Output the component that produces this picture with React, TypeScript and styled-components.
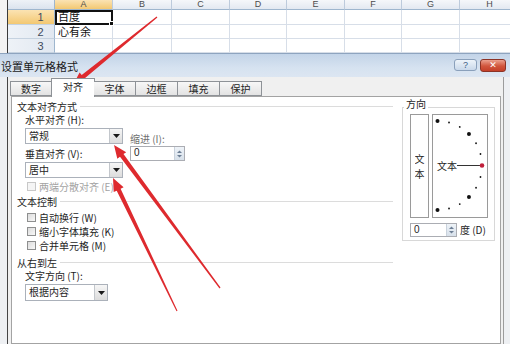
import styled, { createGlobalStyle } from "styled-components";

const GlobalStyle = createGlobalStyle`
  html, body { margin: 0; padding: 0; background: #fff; }
  body {
    font-family: "Noto Sans CJK SC", "Noto Sans", sans-serif;
    color: #1e1e1e;
  }
  * { box-sizing: border-box; }
`;

const COLUMNS = ["A", "B", "C", "D", "E", "F", "G", "H"];
const TABS = ["数字", "对齐", "字体", "边框", "填充", "保护"];

type Pt = [number, number];

function arrowPoints(tail: Pt, tip: Pt): string {
  const [x1, y1] = tail;
  const [x2, y2] = tip;
  const len = Math.hypot(x2 - x1, y2 - y1);
  const ux = (x2 - x1) / len;
  const uy = (y2 - y1) / len;
  const nx = -uy;
  const ny = ux;
  const head = 13;
  const bx = x2 - ux * head;
  const by = y2 - uy * head;
  const pts: Pt[] = [
    [x1 + nx * 0.6, y1 + ny * 0.6],
    [bx + nx * 2.2, by + ny * 2.2],
    [bx + nx * 5.5, by + ny * 5.5],
    [x2, y2],
    [bx - nx * 5.5, by - ny * 5.5],
    [bx - nx * 2.2, by - ny * 2.2],
    [x1 - nx * 0.6, y1 - ny * 0.6],
  ];
  return pts.map((p) => p.map((v) => v.toFixed(1)).join(",")).join(" ");
}

function DownArrow() {
  return (
    <svg width="7" height="4" viewBox="0 0 7 4">
      <path d="M0 0 L7 0 L3.5 4 Z" fill="#1a1a1a" />
    </svg>
  );
}

function Select({ text, width, height = 16 }: { text: string; width: number; height?: number }) {
  return (
    <SelectBox $width={width} $height={height}>
      <SelectText>{text}</SelectText>
      <DropButton>
        <DownArrow />
      </DropButton>
    </SelectBox>
  );
}

function SpinInput({ width, height = 14 }: { width: number; height?: number }) {
  return (
    <SpinBox $width={width} $height={height}>
      <SpinText>0</SpinText>
      <Spinner>
        <svg width="9" height="10" viewBox="0 0 9 10">
          <path d="M4.5 1.5 L7 4 L2 4 Z" fill="#6d7f95" />
          <path d="M2 6 L7 6 L4.5 8.5 Z" fill="#6d7f95" />
        </svg>
      </Spinner>
    </SpinBox>
  );
}

function Dial() {
  const cx = 4.5;
  const cy = 50.5;
  const r = 44.5;
  const dots = [];
  for (let a = -90; a <= 90; a += 15) {
    if (a === 0) continue;
    const t = (a * Math.PI) / 180;
    const big = a % 45 === 0;
    dots.push(
      <circle
        key={a}
        cx={cx + r * Math.cos(t)}
        cy={cy + r * Math.sin(t)}
        r={big ? 2 : 0.9}
        fill="#111"
      />
    );
  }
  return (
    <svg width="54" height="102" viewBox="0 0 54 102">
      {dots}
      <text x="4" y="54.5" fontSize="10" fill="#1e1e1e" fontFamily="Noto Sans CJK SC, sans-serif">
        文本
      </text>
      <line x1="24" y1="50.5" x2="47" y2="50.5" stroke="#333" strokeWidth="1" />
      <circle cx={cx + r} cy={cy} r="2.3" fill="#c0203a" />
    </svg>
  );
}

export default function App(): React.ReactElement {
  return (
    <Page>
      <GlobalStyle />
      <Sheet>
        <Corner />
        {COLUMNS.map((c, i) => (
          <ColHead key={c} $active={i === 0}>
            {c}
          </ColHead>
        ))}
        {[1, 2, 3].map((row) => (
          <SheetRow key={row}>
            <RowHead $active={row === 1}>{row}</RowHead>
            {COLUMNS.map((c, i) => (
              <Cell key={c} $selected={row === 1 && i === 0}>
                {i === 0 && row === 1 && "百度"}
                {i === 0 && row === 2 && "心有余"}
                {row === 1 && i === 0 && <FillHandle />}
              </Cell>
            ))}
          </SheetRow>
        ))}
      </Sheet>

      <Dialog>
        <TitleBar>
          <Title>设置单元格格式</Title>
          <WindowButtons>
            <HelpButton>?</HelpButton>
            <CloseButton>✕</CloseButton>
          </WindowButtons>
        </TitleBar>

        <DialogBody>
          <TabStrip>
            {TABS.map((t) => (
              <Tab key={t} $active={t === "对齐"}>
                {t}
              </Tab>
            ))}
          </TabStrip>

          <Panel>
            <LeftColumn>
              <GroupHeader>文本对齐方式</GroupHeader>
              <FieldLabel>水平对齐 (H):</FieldLabel>
              <AlignRow>
                <AlignMain>
                  <Select text="常规" width={98} />
                  <FieldLabel $tall>垂直对齐 (V):</FieldLabel>
                  <Select text="居中" width={98} />
                </AlignMain>
                <IndentColumn>
                  <IndentLabel>缩进 (I):</IndentLabel>
                  <SpinInput width={55} height={15} />
                </IndentColumn>
              </AlignRow>
              <CheckRow $disabled $height={16}>
                <CheckBox $disabled />
                两端分散对齐 (E)
              </CheckRow>

              <GroupHeader>文本控制</GroupHeader>
              <CheckList>
                <CheckRow>
                  <CheckBox />
                  自动换行 (W)
                </CheckRow>
                <CheckRow>
                  <CheckBox />
                  缩小字体填充 (K)
                </CheckRow>
                <CheckRow>
                  <CheckBox />
                  合并单元格 (M)
                </CheckRow>
              </CheckList>

              <GroupHeader $gapTop={3}>从右到左</GroupHeader>
              <FieldLabel>文字方向 (T):</FieldLabel>
              <DirectionSelect>
                <Select text="根据内容" width={83} height={17} />
              </DirectionSelect>
            </LeftColumn>

            <OrientationGroup>
              <GroupTitle>方向</GroupTitle>
              <Frame>
                <DialRow>
                  <VerticalText>
                    <VerticalChar>文</VerticalChar>
                    <VerticalChar>本</VerticalChar>
                  </VerticalText>
                  <DialBox>
                    <Dial />
                  </DialBox>
                </DialRow>
                <DegreeRow>
                  <SpinInput width={47} />
                  <DegreeLabel>度 (D)</DegreeLabel>
                </DegreeRow>
              </Frame>
            </OrientationGroup>
          </Panel>
        </DialogBody>
      </Dialog>

      <Arrows width="510" height="344" viewBox="0 0 510 344">
        <polygon points={arrowPoints([157, 17], [73, 85])} fill="#de2a2e" />
        <polygon points={arrowPoints([220, 288], [114, 145])} fill="#de2a2e" />
        <polygon points={arrowPoints([177, 311], [113, 178])} fill="#de2a2e" />
      </Arrows>
    </Page>
  );
}

const Page = styled.div`
  position: relative;
  width: 510px;
  height: 344px;
  overflow: hidden;
  background: #f3f3f3;
`;

const Sheet = styled.div`
  display: grid;
  grid-template-columns: 47px 58px 59px 58px 57px 58px 57px 58px 60px;
  grid-template-rows: 10px 15px 14px 14px;
  margin-left: 7px;
  border-left: 1px solid #3a3a3a;
  overflow: hidden;
  background: #fff;
  font-family: "Liberation Sans", "Noto Sans CJK SC", sans-serif;
`;

const Corner = styled.div`
  background: linear-gradient(#eef2f7, #dbe3ee);
  border-right: 1px solid #9eb6ce;
  border-bottom: 1px solid #9eb6ce;
`;

const ColHead = styled.div<{ $active?: boolean }>`
  display: flex;
  align-items: center;
  justify-content: center;
  font-size: 9px;
  line-height: 9px;
  color: #4c4c4c;
  background: ${(p) => (p.$active ? "linear-gradient(#fbe3b3, #f3c872)" : "linear-gradient(#f5f7fa, #e3e9f1)")};
  border-right: 1px solid #bdcbdc;
  border-bottom: 1px solid #9eb6ce;
`;

const SheetRow = styled.div`
  display: contents;
`;

const RowHead = styled.div<{ $active?: boolean }>`
  padding-left: 19px;
  text-align: center;
  font-size: 11px;
  line-height: 14px;
  color: #3e4a5c;
  background: ${(p) => (p.$active ? "linear-gradient(#fbe3b3, #f3c872)" : "linear-gradient(90deg, #eef2f7, #e1e8f1)")};
  border-right: 1px solid #9eb6ce;
  border-bottom: 1px solid #c5d2e0;
`;

const Cell = styled.div<{ $selected?: boolean }>`
  position: relative;
  padding-left: 3px;
  font-size: 11px;
  line-height: 13px;
  font-family: "Noto Sans CJK SC", sans-serif;
  color: #111;
  border-right: 1px solid #d7dee8;
  border-bottom: 1px solid #d7dee8;
  ${(p) => (p.$selected ? "outline: 2px solid #111; outline-offset: -2px; z-index: 1;" : "")}
`;

const FillHandle = styled.span`
  position: absolute;
  right: -2px;
  bottom: -2px;
  width: 5px;
  height: 5px;
  background: #111;
  border: 1px solid #fff;
`;

const Dialog = styled.section`
  height: 291px;
  background: #eef0f3;
  border-top: 1px solid #8ea4bf;
  display: flex;
  flex-direction: column;
`;

const TitleBar = styled.header`
  display: flex;
  align-items: center;
  height: 23px;
  padding: 0 4px 0 1px;
  background: linear-gradient(#c3d4e8, #d6e2f0 60%, #dce6f2);
`;

const Title = styled.h1`
  margin: 0;
  font-size: 11px;
  font-weight: normal;
  color: #1b1b1b;
`;

const WindowButtons = styled.div`
  display: flex;
  gap: 3px;
  margin-left: auto;
  align-self: flex-start;
  margin-top: 5px;
`;

const HelpButton = styled.div`
  width: 23px;
  height: 12px;
  border: 1px solid #8aa0bb;
  border-radius: 3px;
  background: linear-gradient(#eef4fa, #c9d8ea);
  color: #3d5f87;
  font-size: 9px;
  line-height: 10px;
  text-align: center;
  font-family: "Liberation Sans", sans-serif;
`;

const CloseButton = styled.div`
  width: 26px;
  height: 13px;
  border: 1px solid #8c3326;
  border-radius: 3px;
  background: linear-gradient(#eba18f, #d1553c 55%, #c4402a);
  color: #fff;
  font-size: 9px;
  line-height: 11px;
  font-weight: bold;
  text-align: center;
  font-family: "DejaVu Sans", sans-serif;
`;

const DialogBody = styled.div`
  flex: 1;
  display: flex;
  flex-direction: column;
  margin: 0 6px 0 7px;
  padding: 0 2px 0 3px;
  border-left: 1px solid #454545;
  border-right: 1px solid #9c9c9c;
  background: #f0f0f0;
`;

const TabStrip = styled.nav`
  display: flex;
  align-items: flex-end;
  height: 19px;
  margin-left: -1px;
  position: relative;
  z-index: 1;
`;

const Tab = styled.div<{ $active?: boolean }>`
  width: ${(p) => (p.$active ? "44px" : "42px")};
  height: ${(p) => (p.$active ? "19px" : "15px")};
  margin: ${(p) => (p.$active ? "0 -1px -1px" : "0")};
  border: 1px solid #8e9297;
  border-bottom: ${(p) => (p.$active ? "none" : "1px solid #8e9297")};
  border-left-width: ${(p) => (p.$active ? "1px" : "0")};
  background: ${(p) => (p.$active ? "#fff" : "linear-gradient(#f7f7f7, #e3e3e3)")};
  font-size: 10px;
  line-height: ${(p) => (p.$active ? "16px" : "13px")};
  text-align: center;
  &:first-child {
    border-left-width: 1px;
  }
`;

const Panel = styled.main`
  flex: 1;
  display: flex;
  padding: 2px 0 0 5px;
  border: 1px solid #a3a3a3;
  background: #fff;
  font-size: 10px;
`;

const LeftColumn = styled.div`
  width: 376px;
  display: flex;
  flex-direction: column;
`;

const GroupHeader = styled.div<{ $gapTop?: number }>`
  display: flex;
  align-items: center;
  gap: 3px;
  height: 14px;
  margin-top: ${(p) => p.$gapTop ?? 0}px;
  white-space: nowrap;
  &::after {
    content: "";
    flex: 1;
    border-top: 1px solid #dcdcdc;
  }
`;

const FieldLabel = styled.div<{ $tall?: boolean }>`
  height: ${(p) => (p.$tall ? "18px" : "14px")};
  line-height: ${(p) => (p.$tall ? "19px" : "14px")};
  padding-left: 8px;
  white-space: nowrap;
`;

const AlignRow = styled.div`
  display: flex;
  padding-left: 8px;
  margin-top: 1px;
`;

const AlignMain = styled.div`
  display: flex;
  flex-direction: column;
  & > ${FieldLabel} {
    padding-left: 0;
  }
`;

const IndentColumn = styled.div`
  display: flex;
  flex-direction: column;
  margin-left: 7px;
  padding-top: 4px;
`;

const IndentLabel = styled.div`
  height: 14px;
  line-height: 14px;
  color: #6f6f6f;
`;

const SelectBox = styled.div<{ $width: number; $height: number }>`
  display: flex;
  width: ${(p) => p.$width}px;
  height: ${(p) => p.$height}px;
  border: 1px solid #abb1ba;
  background: #fff;
`;

const SelectText = styled.span`
  flex: 1;
  padding-left: 3px;
  line-height: 14px;
`;

const DropButton = styled.span`
  display: flex;
  align-items: center;
  justify-content: center;
  width: 13px;
  border-left: 1px solid #c3c7cc;
  background: linear-gradient(#f6f6f6, #dcdcdc);
`;

const SpinBox = styled.div<{ $width: number; $height: number }>`
  display: flex;
  width: ${(p) => p.$width}px;
  height: ${(p) => p.$height}px;
  border: 1px solid #abadb3;
  background: #fff;
`;

const SpinText = styled.span`
  flex: 1;
  padding-left: 3px;
  line-height: 12px;
  font-family: "Liberation Sans", sans-serif;
`;

const Spinner = styled.span`
  display: flex;
  align-items: center;
  justify-content: center;
  width: 10px;
  background: linear-gradient(#eef3f8, #d7e0ea);
  border-left: 1px solid #c9d2dc;
`;

const CheckRow = styled.label<{ $disabled?: boolean; $height?: number }>`
  display: flex;
  align-items: center;
  gap: 3px;
  height: ${(p) => p.$height ?? 14}px;
  padding-left: 10px;
  color: ${(p) => (p.$disabled ? "#a3a3a3" : "#1e1e1e")};
  white-space: nowrap;
`;

const CheckBox = styled.span<{ $disabled?: boolean }>`
  width: 9px;
  height: 9px;
  border: 1px solid ${(p) => (p.$disabled ? "#c8c8c8" : "#8e8f8f")};
  background: ${(p) => (p.$disabled ? "#f5f5f5" : "linear-gradient(135deg, #dcdcdc, #f8f8f8)")};
`;

const CheckList = styled.div`
  display: flex;
  flex-direction: column;
  margin-top: 2px;
`;

const DirectionSelect = styled.div`
  padding-left: 8px;
  margin-top: 1px;
`;

const OrientationGroup = styled.aside`
  display: flex;
  flex-direction: column;
  margin-left: 9px;
  width: 93px;
`;

const GroupTitle = styled.div`
  position: relative;
  z-index: 1;
  align-self: flex-start;
  height: 10px;
  line-height: 10px;
  margin-left: 2px;
  padding: 0 2px;
  background: #fff;
`;

const Frame = styled.div`
  height: 134px;
  margin-top: -2px;
  padding: 6px 0 0 7px;
  border: 1px solid #d8d8d8;
`;

const DialRow = styled.div`
  display: flex;
  gap: 3px;
`;

const VerticalText = styled.div`
  display: flex;
  flex-direction: column;
  align-items: center;
  justify-content: center;
  gap: 2px;
  width: 19px;
  height: 104px;
  border: 1px solid #9a9a9a;
`;

const VerticalChar = styled.span`
  display: block;
  height: 13px;
  line-height: 13px;
  overflow: hidden;
`;

const DialBox = styled.div`
  width: 56px;
  height: 104px;
  border: 1px solid #9a9a9a;
`;

const DegreeRow = styled.div`
  display: flex;
  align-items: center;
  margin-top: 4px;
`;

const DegreeLabel = styled.span`
  margin-left: 3px;
  white-space: nowrap;
`;

const Arrows = styled.svg`
  position: absolute;
  top: 0;
  left: 0;
  pointer-events: none;
`;
